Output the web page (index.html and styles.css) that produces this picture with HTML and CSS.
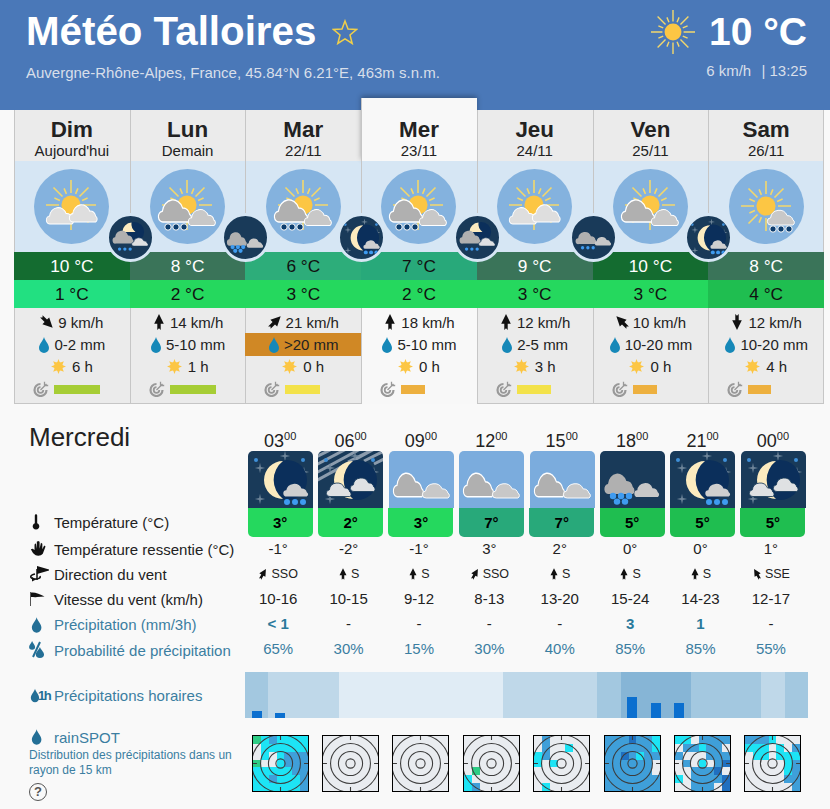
FILE: index.html
```html
<!DOCTYPE html>
<html lang="fr">
<head>
  <meta charset="UTF-8">
  <meta name="viewport" content="width=device-width, initial-scale=1.0">
  <title>Météo Talloires</title>
  <link rel="stylesheet" href="styles.css">
</head>
<body>

<!-- shared drawings -->
<svg class="defs" width="0" height="0" aria-hidden="true">
  <defs>
    <path id="cloud" d="M6 25a5 5 0 0 1-1-10a12 12 0 0 1 23-3a8 8 0 0 1 8 6a4 4 0 0 1 0 7z"/>
    <path id="drop" d="M6 0C7 4 11 7 11 11a5 5 0 0 1-10 0C1 7 5 4 6 0z"/>
    <path id="arrow" d="M6 0L10.200 8.500H7.500V14L6 12.500L4.500 14V8.500H1.800z"/>
    <path id="star4" d="M0-4L.7-.7L4 0L.7 .7L0 4L-.7 .7L-4 0L-.7-.7z"/>

    <symbol id="sun" viewBox="-25 -25 50 50">
      <g class="rays">
        <path d="M0-12V-25M0 12V25M-12 0H-25M12 0H25M-8.500-8.500L-17.500-17.500M8.500-8.500L17.500-17.500M-8.500 8.500L-17.500 17.500M8.500 8.500L17.500 17.500"/>
        <path d="M4.600-11.100L6.900-16.600M11.100-4.600L16.600-6.900M11.100 4.600L16.600 6.900M4.600 11.100L6.900 16.600M-4.600-11.100L-6.900-16.600M-11.100-4.600L-16.600-6.900M-11.100 4.600L-16.600 6.900M-4.600 11.100L-6.900 16.600"/>
      </g>
      <circle class="sun-disk" r="9.600"/>
    </symbol>

    <symbol id="small-sun" viewBox="-8 -8 16 16">
      <path class="spikes" d="M0-8L1.500-4L5.700-5.700L4-1.500L8 0L4 1.500L5.700 5.700L1.500 4L0 8L-1.500 4L-5.700 5.700L-4 1.500L-8 0L-4-1.500L-5.700-5.700L-1.500-4z"/>
      <circle class="spikes" r="4.700"/>
    </symbol>

    <symbol id="target" viewBox="0 0 16 16">
      <path class="target-ring" d="M7.500 3a6 6 0 1 0 6 6"/>
      <path class="target-in" d="M7.500 6.200a2.800 2.800 0 1 0 2.800 2.800"/>
      <path class="target-arrow" d="M7.500 9L13.500 3M11.500 .8V4.500H15.200"/>
    </symbol>

    <!-- day icons, blue disc -->
    <symbol id="d-sun-clouds" viewBox="0 0 75 75">
      <circle class="disc" cx="37.500" cy="37.500" r="37.500"/>
      <use href="#sun" x="12" y="11" width="50" height="50"/>
      <use href="#cloud" class="c-light" transform="translate(12 35) scale(.72 .8)"/>
      <use href="#cloud" class="c-light" transform="translate(35 32) scale(.74 .84)"/>
    </symbol>
    <symbol id="d-sun-overcast" viewBox="0 0 75 75">
      <circle class="disc" cx="37.500" cy="37.500" r="37.500"/>
      <use href="#sun" x="12" y="11" width="50" height="50"/>
      <use href="#cloud" class="c-grey" transform="translate(8 26) scale(.88 1.08)"/>
      <use href="#cloud" class="c-soft" transform="translate(38 37) scale(.72 .78)"/>
    </symbol>
    <symbol id="d-sun-overcast-rain" viewBox="0 0 75 75">
      <use href="#d-sun-overcast" width="75" height="75"/>
      <g class="drops-dark"><circle cx="18" cy="58" r="3.200"/><circle cx="26" cy="58" r="3.200"/><circle cx="34" cy="58" r="3.200"/></g>
    </symbol>
    <symbol id="d-sun-shower" viewBox="0 0 75 75">
      <circle class="disc" cx="37.500" cy="37.500" r="37.500"/>
      <use href="#sun" x="12" y="12" width="50" height="50"/>
      <use href="#cloud" class="c-soft" transform="translate(38 38) scale(.72 .72)"/>
      <g class="drops-dark"><circle cx="44" cy="60" r="3.200"/><circle cx="52" cy="60" r="3.200"/><circle cx="60" cy="60" r="3.200"/></g>
    </symbol>

    <!-- tile icons, 65x57 -->
    <symbol id="stars" viewBox="0 0 65 57">
      <g class="star-grey">
        <use href="#star4" transform="translate(12 17) scale(1.300)"/>
        <use href="#star4" transform="translate(37 5) scale(1.300)"/>
        <use href="#star4" transform="translate(56 21) scale(1.300)"/>
        <use href="#star4" transform="translate(12 48) scale(1.300)"/>
      </g>
      <g class="star-blue">
        <circle cx="8" cy="9" r="2"/><circle cx="55" cy="9" r="2"/>
      </g>
    </symbol>
    <symbol id="moon" viewBox="0 0 65 57">
      <circle class="moon-dark" cx="39" cy="29" r="20"/>
      <path class="moon-lit" d="M35 10A19 19 0 0 0 35 48A24 24 0 0 1 35 10z"/>
    </symbol>
    <symbol id="t-moon-rain" viewBox="0 0 65 57">
      <use href="#stars" width="65" height="57"/>
      <use href="#moon" width="65" height="57"/>
      <use href="#cloud" class="c-night" transform="translate(35 30) scale(.66 .62)"/>
      <g class="drops-blue"><circle cx="39" cy="51" r="3"/><circle cx="47" cy="51" r="3"/><circle cx="55" cy="51" r="3"/></g>
    </symbol>
    <symbol id="t-moon-clouds" viewBox="0 0 65 57">
      <use href="#stars" width="65" height="57"/>
      <use href="#moon" width="65" height="57"/>
      <use href="#cloud" class="c-pale" transform="translate(8 29) scale(.66 .66)"/>
      <use href="#cloud" class="c-pale" transform="translate(32 24) scale(.66 .66)"/>
    </symbol>
    <symbol id="t-haze-clouds" viewBox="0 0 65 57">
      <path class="haze" d="M-4 7L16 -3M-4 15L32 -4M-4 23L46 -4M-4 31L60 -4M30 11L70 -9M46 10L70 -2M56 13L70 6"/>
      <use href="#t-moon-clouds" width="65" height="57"/>
    </symbol>
    <symbol id="t-overcast" viewBox="0 0 65 57">
      <use href="#cloud" class="c-grey" transform="translate(4 17) scale(.8 1.150)"/>
      <use href="#cloud" class="c-soft" transform="translate(33 29.500) scale(.72 .7)"/>
    </symbol>
    <symbol id="t-snow" viewBox="0 0 65 57">
      <use href="#cloud" class="c-dim" transform="translate(4 18) scale(.8 1)"/>
      <use href="#cloud" class="c-dim2" transform="translate(34 29) scale(.66 .68)"/>
      <g class="drops-blue">
        <circle cx="13" cy="45" r="3.200"/><circle cx="21" cy="45" r="3.200"/><circle cx="29" cy="45" r="3.200"/>
        <circle cx="17" cy="50.600" r="3.200"/><circle cx="25" cy="50.600" r="3.200"/>
      </g>
    </symbol>
    <symbol id="t-clouds-rain" viewBox="0 0 65 57">
      <use href="#cloud" class="c-dim" transform="translate(5 18) scale(.85 .9)"/>
      <use href="#cloud" class="c-dim2" transform="translate(34 27) scale(.66 .62)"/>
      <g class="drops-blue"><circle cx="16" cy="46" r="2.500"/><circle cx="24" cy="46" r="2.500"/><circle cx="32" cy="46" r="2.500"/></g>
    </symbol>
    <symbol id="t-moon-overcast-rain" viewBox="0 0 65 57">
      <circle class="moon-dark" cx="38" cy="20" r="15"/>
      <path class="moon-lit" d="M34 6A15 15 0 0 0 20 20H40A15 15 0 0 1 34 6z"/>
      <use href="#cloud" class="c-dim" transform="translate(5 14) scale(.85 .95)"/>
      <use href="#cloud" class="c-pale" transform="translate(34 26) scale(.66 .62)"/>
      <g class="drops-blue"><circle cx="16" cy="46" r="2.500"/><circle cx="24" cy="46" r="2.500"/><circle cx="32" cy="46" r="2.500"/></g>
    </symbol>

    <!-- row icons -->
    <symbol id="i-thermo" viewBox="0 0 21 18">
      <path class="i-black" d="M5.800 2.500a1.200 1.200 0 0 1 2.400 0V10.200a3.300 3.300 0 1 1-2.400 0z"/>
    </symbol>
    <symbol id="i-hand" viewBox="0 0 21 18">
      <path class="i-black" transform="scale(.92)" d="M10 17C6 17 4 14 2 10L4 9.500L6 11V5L7.500 3.500L8.500 9.500V2L10 1L11.500 2V9.500L13 3L14.500 4V10L16.500 6L18 7L15 15C14 16.500 12 17 10 17z"/>
    </symbol>
    <symbol id="i-sock-turn" viewBox="0 0 21 18">
      <path class="i-line" d="M8 4V15"/>
      <path class="i-black" d="M8 1L20 4.500V5.500L8 9z"/>
      <path class="i-line" d="M6 9C1 10 0 13 5 14C9 14.500 12 13 11 11"/>
      <path class="i-black" d="M3 12L7 14.500L3 16.500z"/>
    </symbol>
    <symbol id="i-sock" viewBox="0 0 21 18">
      <path class="i-thin" d="M1.500 1V15"/>
      <path class="i-black" d="M2 1.500C6 1 11 3 15.500 5.500L8 6C6 6.500 4 6 2 6z"/>
    </symbol>
    <symbol id="i-drop" viewBox="-2 0 22 16">
      <use href="#drop" class="i-blue"/>
    </symbol>
    <symbol id="i-percent" viewBox="0 0 21 18">
      <use href="#drop" class="i-blue" transform="translate(-.5 0) scale(.6 .55)"/>
      <use href="#drop" class="i-blue" transform="translate(6 6) scale(.82 .68)"/>
      <path class="i-slash" d="M11 1L4 16"/>
    </symbol>
  </defs>
</svg>

<header class="head">
  <div class="head-left">
    <h1>Météo Talloires
      <svg class="fav" viewBox="0 0 26 26"><path d="M13 2L16 10L24.500 10.500L18 16L20.200 24.500L13 19.800L5.800 24.500L8 16L1.500 10.500L10 10z"/></svg>
    </h1>
    <p>Auvergne-Rhône-Alpes, France, 45.84°N 6.21°E, 463m s.n.m.</p>
  </div>
  <div class="head-right">
    <div class="now">
      <svg class="now-sun"><use href="#sun"/></svg>
      <span class="now-temp">10 °C</span>
    </div>
    <p class="now-sub">6 km/h <span class="sep">|</span> 13:25</p>
  </div>
</header>

<section class="days">

  <div class="day">
    <div class="day-head"><div class="day-name">Dim</div><div class="day-date">Aujourd'hui</div></div>
    <div class="day-icon">
      <svg class="day-pic"><use href="#d-sun-clouds"/></svg>
      <svg class="night" viewBox="0 0 65 65"><use href="#t-moon-overcast-rain" y="4" width="65" height="57"/></svg>
    </div>
    <div class="tmax t10">10 °C</div>
    <div class="tmin m1">1 °C</div>
    <div class="day-info">
      <div class="info-row"><svg class="wind" viewBox="0 0 12 14"><use href="#arrow" transform="rotate(135 6 7)"/></svg>9 km/h</div>
      <div class="info-row"><svg class="rain" viewBox="0 0 12 16"><use href="#drop"/></svg>0-2 mm</div>
      <div class="info-row sunny"><svg class="shine"><use href="#small-sun"/></svg>6 h</div>
      <div class="conf"><svg class="conf-ico"><use href="#target"/></svg><span class="conf-bar good w46"></span></div>
    </div>
  </div>

  <div class="day">
    <div class="day-head"><div class="day-name">Lun</div><div class="day-date">Demain</div></div>
    <div class="day-icon">
      <svg class="day-pic"><use href="#d-sun-overcast-rain"/></svg>
      <svg class="night" viewBox="0 0 65 65"><use href="#t-snow" y="2" width="65" height="57"/></svg>
    </div>
    <div class="tmax t8">8 °C</div>
    <div class="tmin m2">2 °C</div>
    <div class="day-info">
      <div class="info-row"><svg class="wind" viewBox="0 0 12 14"><use href="#arrow"/></svg>14 km/h</div>
      <div class="info-row"><svg class="rain" viewBox="0 0 12 16"><use href="#drop"/></svg>5-10 mm</div>
      <div class="info-row sunny"><svg class="shine"><use href="#small-sun"/></svg>1 h</div>
      <div class="conf"><svg class="conf-ico"><use href="#target"/></svg><span class="conf-bar good w46"></span></div>
    </div>
  </div>

  <div class="day">
    <div class="day-head"><div class="day-name">Mar</div><div class="day-date">22/11</div></div>
    <div class="day-icon">
      <svg class="day-pic"><use href="#d-sun-overcast-rain"/></svg>
      <svg class="night" viewBox="0 0 65 65"><use href="#t-moon-rain" y="4" width="65" height="57"/></svg>
    </div>
    <div class="tmax t6">6 °C</div>
    <div class="tmin m2">3 °C</div>
    <div class="day-info">
      <div class="info-row"><svg class="wind" viewBox="0 0 12 14"><use href="#arrow" transform="rotate(45 6 7)"/></svg>21 km/h</div>
      <div class="info-row heavy"><svg class="rain" viewBox="0 0 12 16"><use href="#drop"/></svg>&gt;20 mm</div>
      <div class="info-row sunny"><svg class="shine"><use href="#small-sun"/></svg>0 h</div>
      <div class="conf"><svg class="conf-ico"><use href="#target"/></svg><span class="conf-bar fair w35"></span></div>
    </div>
  </div>

  <div class="day active">
    <div class="day-head"><div class="day-name">Mer</div><div class="day-date">23/11</div></div>
    <div class="day-icon">
      <svg class="day-pic"><use href="#d-sun-overcast-rain"/></svg>
      <svg class="night" viewBox="0 0 65 65"><use href="#t-moon-overcast-rain" y="4" width="65" height="57"/></svg>
    </div>
    <div class="tmax t7">7 °C</div>
    <div class="tmin m2">2 °C</div>
    <div class="day-info">
      <div class="info-row"><svg class="wind" viewBox="0 0 12 14"><use href="#arrow"/></svg>18 km/h</div>
      <div class="info-row"><svg class="rain" viewBox="0 0 12 16"><use href="#drop"/></svg>5-10 mm</div>
      <div class="info-row sunny"><svg class="shine"><use href="#small-sun"/></svg>0 h</div>
      <div class="conf"><svg class="conf-ico"><use href="#target"/></svg><span class="conf-bar poor w24"></span></div>
    </div>
  </div>

  <div class="day">
    <div class="day-head"><div class="day-name">Jeu</div><div class="day-date">24/11</div></div>
    <div class="day-icon">
      <svg class="day-pic"><use href="#d-sun-clouds"/></svg>
      <svg class="night" viewBox="0 0 65 65"><use href="#t-clouds-rain" y="2" width="65" height="57"/></svg>
    </div>
    <div class="tmax t8">9 °C</div>
    <div class="tmin m2">3 °C</div>
    <div class="day-info">
      <div class="info-row"><svg class="wind" viewBox="0 0 12 14"><use href="#arrow"/></svg>12 km/h</div>
      <div class="info-row"><svg class="rain" viewBox="0 0 12 16"><use href="#drop"/></svg>2-5 mm</div>
      <div class="info-row sunny"><svg class="shine"><use href="#small-sun"/></svg>3 h</div>
      <div class="conf"><svg class="conf-ico"><use href="#target"/></svg><span class="conf-bar fair w34"></span></div>
    </div>
  </div>

  <div class="day">
    <div class="day-head"><div class="day-name">Ven</div><div class="day-date">25/11</div></div>
    <div class="day-icon">
      <svg class="day-pic"><use href="#d-sun-overcast"/></svg>
      <svg class="night" viewBox="0 0 65 65"><use href="#t-moon-rain" y="4" width="65" height="57"/></svg>
    </div>
    <div class="tmax t10">10 °C</div>
    <div class="tmin m2">3 °C</div>
    <div class="day-info">
      <div class="info-row"><svg class="wind" viewBox="0 0 12 14"><use href="#arrow" transform="rotate(-45 6 7)"/></svg>10 km/h</div>
      <div class="info-row"><svg class="rain" viewBox="0 0 12 16"><use href="#drop"/></svg>10-20 mm</div>
      <div class="info-row sunny"><svg class="shine"><use href="#small-sun"/></svg>0 h</div>
      <div class="conf"><svg class="conf-ico"><use href="#target"/></svg><span class="conf-bar poor w24"></span></div>
    </div>
  </div>

  <div class="day">
    <div class="day-head"><div class="day-name">Sam</div><div class="day-date">26/11</div></div>
    <div class="day-icon">
      <svg class="day-pic"><use href="#d-sun-shower"/></svg>
    </div>
    <div class="tmax t8">8 °C</div>
    <div class="tmin m4">4 °C</div>
    <div class="day-info">
      <div class="info-row"><svg class="wind" viewBox="0 0 12 14"><use href="#arrow" transform="rotate(180 6 7)"/></svg>12 km/h</div>
      <div class="info-row"><svg class="rain" viewBox="0 0 12 16"><use href="#drop"/></svg>10-20 mm</div>
      <div class="info-row sunny"><svg class="shine"><use href="#small-sun"/></svg>4 h</div>
      <div class="conf"><svg class="conf-ico"><use href="#target"/></svg><span class="conf-bar poor w23"></span></div>
    </div>
  </div>

</section>

<section class="hours">
  <h2 class="hours-title">Mercredi</h2>
  <div class="time">03<sup>00</sup></div>
  <div class="time">06<sup>00</sup></div>
  <div class="time">09<sup>00</sup></div>
  <div class="time">12<sup>00</sup></div>
  <div class="time">15<sup>00</sup></div>
  <div class="time">18<sup>00</sup></div>
  <div class="time">21<sup>00</sup></div>
  <div class="time">00<sup>00</sup></div>

  <svg class="tile dark"><use href="#t-moon-rain"/></svg>
  <svg class="tile dark"><use href="#t-haze-clouds"/></svg>
  <svg class="tile sky"><use href="#t-overcast"/></svg>
  <svg class="tile sky"><use href="#t-overcast"/></svg>
  <svg class="tile sky"><use href="#t-overcast"/></svg>
  <svg class="tile dark"><use href="#t-snow"/></svg>
  <svg class="tile dark"><use href="#t-moon-rain"/></svg>
  <svg class="tile dark"><use href="#t-moon-clouds"/></svg>

  <div class="lbl"><svg class="lbl-ico"><use href="#i-thermo"/></svg>Température (°C)</div>
  <div class="tile-temp m2">3°</div>
  <div class="tile-temp m2">2°</div>
  <div class="tile-temp m2">3°</div>
  <div class="tile-temp t7">7°</div>
  <div class="tile-temp t7">7°</div>
  <div class="tile-temp m4">5°</div>
  <div class="tile-temp m4">5°</div>
  <div class="tile-temp m4">5°</div>

  <div class="lbl"><svg class="lbl-ico"><use href="#i-hand"/></svg>Température ressentie (°C)</div>
  <div class="val">-1°</div><div class="val">-2°</div><div class="val">-1°</div><div class="val">3°</div>
  <div class="val">2°</div><div class="val">0°</div><div class="val">0°</div><div class="val">1°</div>

  <div class="lbl"><svg class="lbl-ico"><use href="#i-sock-turn"/></svg>Direction du vent</div>
  <div class="val dir"><svg class="dir-arrow" viewBox="0 0 12 14"><use href="#arrow" transform="rotate(30 6 7)"/></svg>SSO</div>
  <div class="val dir"><svg class="dir-arrow" viewBox="0 0 12 14"><use href="#arrow"/></svg>S</div>
  <div class="val dir"><svg class="dir-arrow" viewBox="0 0 12 14"><use href="#arrow"/></svg>S</div>
  <div class="val dir"><svg class="dir-arrow" viewBox="0 0 12 14"><use href="#arrow" transform="rotate(30 6 7)"/></svg>SSO</div>
  <div class="val dir"><svg class="dir-arrow" viewBox="0 0 12 14"><use href="#arrow"/></svg>S</div>
  <div class="val dir"><svg class="dir-arrow" viewBox="0 0 12 14"><use href="#arrow"/></svg>S</div>
  <div class="val dir"><svg class="dir-arrow" viewBox="0 0 12 14"><use href="#arrow"/></svg>S</div>
  <div class="val dir"><svg class="dir-arrow" viewBox="0 0 12 14"><use href="#arrow" transform="rotate(-30 6 7)"/></svg>SSE</div>

  <div class="lbl"><svg class="lbl-ico"><use href="#i-sock"/></svg>Vitesse du vent (km/h)</div>
  <div class="val">10-16</div><div class="val">10-15</div><div class="val">9-12</div><div class="val">8-13</div>
  <div class="val">13-20</div><div class="val">15-24</div><div class="val">14-23</div><div class="val">12-17</div>

  <div class="lbl blue"><svg class="lbl-ico"><use href="#i-drop"/></svg>Précipitation (mm/3h)</div>
  <div class="val mm">&lt; 1</div><div class="val">-</div><div class="val">-</div><div class="val">-</div>
  <div class="val">-</div><div class="val mm">3</div><div class="val mm">1</div><div class="val">-</div>

  <div class="lbl blue"><svg class="lbl-ico"><use href="#i-percent"/></svg>Probabilité de précipitation</div>
  <div class="val blue">65%</div><div class="val blue">30%</div><div class="val blue">15%</div><div class="val blue">30%</div>
  <div class="val blue">40%</div><div class="val blue">85%</div><div class="val blue">85%</div><div class="val blue">55%</div>

  <div class="lbl blue lbl-hourly">
    <span class="lbl-ico one-h"><svg class="one-h-drop" viewBox="0 0 12 16"><use href="#drop"/></svg><span class="one-h-text">1h</span></span>Précipitations horaires
  </div>
  <div class="strip">
    <div class="hr s2"><i style="height:7px"></i></div>
    <div class="hr s1"><i style="height:5px"></i></div>
    <div class="hr s1"></div>
    <div class="hr s1"></div>
    <div class="hr s0"></div>
    <div class="hr s0"></div>
    <div class="hr s0"></div>
    <div class="hr s0"></div>
    <div class="hr s0"></div>
    <div class="hr s0"></div>
    <div class="hr s0"></div>
    <div class="hr s1"></div>
    <div class="hr s1"></div>
    <div class="hr s1"></div>
    <div class="hr s1"></div>
    <div class="hr s2"></div>
    <div class="hr s3"><i style="height:21px"></i></div>
    <div class="hr s3"><i style="height:15px"></i></div>
    <div class="hr s3"><i style="height:15px"></i></div>
    <div class="hr s2"></div>
    <div class="hr s2"></div>
    <div class="hr s2"></div>
    <div class="hr s1"></div>
    <div class="hr s2"></div>
  </div>

  <div class="spot-label">
    <div class="lbl blue spot-name"><svg class="lbl-ico"><use href="#i-drop"/></svg>rainSPOT</div>
    <p class="spot-text">Distribution des précipitations dans un rayon de 15 km</p>
    <span class="help">?</span>
  </div>

  <svg class="spot" viewBox="0 0 56 56">
    <path class="sc" d="M8 4h8M24 4h32M8 12h48M8 20h8M24 20h8M24 28h8M0 36h40M0 44h16M24 44h24M0 52h48"/>
    <path class="sb" d="M16 4h8M48 20h8M32 20h16M32 28h24M40 36h16M16 44h8M48 44h8M48 52h8"/>
    <path class="sg" d="M0 4h8M0 28h8"/>
    <use href="#rings"/>
  </svg>
  <svg class="spot" viewBox="0 0 56 56"><use href="#rings"/></svg>
  <svg class="spot" viewBox="0 0 56 56"><use href="#rings"/></svg>
  <svg class="spot" viewBox="0 0 56 56">
    <path class="sc" d="M0 44h8M0 52h8"/>
    <path class="sb" d="M8 52h8"/>
    <path class="sg" d="M8 36h8"/>
    <use href="#rings"/>
  </svg>
  <svg class="spot" viewBox="0 0 56 56">
    <path class="sc" d="M32 12h8M0 20h8M0 28h8M16 28h8M8 52h8"/>
    <path class="sb" d="M8 4h8M8 12h8M8 20h8"/>
    <use href="#rings"/>
  </svg>
  <svg class="spot" viewBox="0 0 56 56">
    <path class="sb" d="M0 4h56M0 12h56M0 20h56M0 28h48M0 36h48M0 44h56M0 52h56"/>
    <path class="sd" d="M24 4h8M16 20h8"/>
    <path class="sc" d="M48 4h8M48 12h8M32 20h8"/>
    <use href="#rings"/>
  </svg>
  <svg class="spot" viewBox="0 0 56 56">
    <path class="sc" d="M0 4h16M24 12h8M0 44h8M24 28h8"/>
    <path class="sb" d="M24 4h32M8 12h16M32 12h16M48 20h8M0 20h8M32 20h16M8 28h8M40 28h8M16 36h24M16 44h32M16 52h24"/>
    <path class="sd" d="M48 28h8M40 36h8M48 44h8M48 52h8"/>
    <use href="#rings"/>
  </svg>
  <svg class="spot" viewBox="0 0 56 56">
    <path class="sb" d="M0 4h24M48 12h8M48 28h8M48 36h8M40 44h16M48 52h8"/>
    <path class="sc" d="M24 4h8M0 12h24M32 12h8M8 20h16M32 20h24M40 28h8M40 36h8"/>
    <use href="#rings"/>
  </svg>
</section>

<svg class="defs" width="0" height="0" aria-hidden="true">
  <defs>
    <g id="rings" class="rings">
      <circle cx="28" cy="28" r="4.700"/>
      <circle cx="28" cy="28" r="12.300"/>
      <circle cx="28" cy="28" r="20.300"/>
      <circle cx="28" cy="28" r="29.300"/>
      <path d="M28 0V4M28 52V56M0 28H4M52 28H56"/>
    </g>
  </defs>
</svg>

</body>
</html>
```
FILE: styles.css
```css
body {
  font-family: "Liberation Sans", Arial, sans-serif;
  background-color: #f9f9f9;
  color: #222;
  margin: 0;
}
svg { display: block; }
.defs { position: absolute; }

/* header */
.head {
  display: flex;
  justify-content: space-between;
  height: 110px;
  padding: 0 23px 0 26px;
  box-sizing: border-box;
  background-color: #4a78b8;
  color: #fff;
}
.head h1 {
  display: flex;
  align-items: center;
  gap: 16px;
  font-size: 40.300px;
  line-height: 44px;
  margin: 10px 0 0;
}
.fav {
  width: 26px;
  height: 26px;
  fill: none;
  stroke: #f0cf4a;
  stroke-width: 1.500;
}
.head p {
  margin: 10px 0 0;
  font-size: 15px;
  line-height: 18px;
  color: #d8dfea;
}
.head-right { text-align: right; }
.now {
  display: flex;
  align-items: center;
  justify-content: flex-end;
  gap: 14px;
  margin-top: 10px;
  height: 44px;
}
.now-sun { width: 44px; height: 44px; }
.now-temp { font-size: 39px; font-weight: bold; }
.head .now-sub { margin-top: 8px; font-size: 15px; }
.sep { margin-left: 6px; }

.rays { stroke: #f3d76c; stroke-width: 1.600; fill: none; }
.sun-disk { fill: #fcc644; }

/* seven day tabs */
.days {
  display: grid;
  grid-template-columns: repeat(7, 1fr);
  width: 810px;
  margin-left: 14px;
}
.day { position: relative; }
.day.active { margin-top: -12px; }
.day-head, .day-icon, .day-info {
  border-left: 1px solid #c6c6c6;
  padding-right: 1px;
}
.day:last-child .day-head,
.day:last-child .day-icon,
.day:last-child .day-info {
  border-right: 1px solid #c6c6c6;
  padding-right: 0;
}
.day-head {
  height: 51px;
  box-sizing: border-box;
  padding-top: 7px;
  text-align: center;
  background-color: #ebebeb;
}
.active .day-head {
  height: 63px;
  padding-top: 19px;
  background-color: #f8f8f8;
  box-shadow: 0 -2px 5px rgba(0, 0, 0, .3);
}
.day-name { font-size: 22.400px; font-weight: bold; line-height: 25px; }
.day-date { font-size: 15px; line-height: 18px; }
.day-icon {
  position: relative;
  height: 91px;
  box-sizing: border-box;
  padding-top: 8px;
  background-color: #d6e6f4;
}
.day-pic { width: 75px; height: 75px; margin: 0 auto; }
.night {
  position: absolute;
  z-index: 2;
  top: 52px;
  right: -25px;
  width: 43px;
  height: 43px;
  border: 3px solid #d6e6f4;
  border-radius: 50%;
  background-color: #193a59;
}
.tmax, .tmin {
  height: 28px;
  font-size: 17.300px;
  line-height: 28px;
  text-align: center;
  color: #111;
}
.t10 { background-color: #146c30; color: #fff; }
.t8 { background-color: #3a7459; color: #fff; }
.t6 { background-color: #2dad7a; }
.t7 { background-color: #28a97a; }
.m1 { background-color: #22e081; }
.m2 { background-color: #25d85e; }
.m4 { background-color: #1fbe50; }

.day-info {
  height: 96px;
  box-sizing: border-box;
  padding-top: 3px;
  background-color: #ebebeb;
  border-bottom: 1px solid #c6c6c6;
  font-size: 15px;
}
.active .day-info { background-color: #f8f8f8; border-bottom: 0; }
.info-row {
  display: flex;
  align-items: center;
  justify-content: center;
  gap: 4px;
  height: 22.400px;
}
.heavy { margin: 0 -1px; background-color: #d08825; }
.wind { width: 14px; height: 16px; fill: #111; }
.rain { width: 12px; height: 16px; fill: #1688b8; }
.shine { width: 15px; height: 15px; }
.spikes { fill: #fcc644; }
.sunny { gap: 6px; }
.conf {
  display: flex;
  align-items: center;
  gap: 5px;
  height: 22px;
  padding-left: 18px;
}
.conf-ico { width: 16px; height: 16px; }
.target-ring { fill: none; stroke: #999; stroke-width: 2.200; }
.target-in { fill: none; stroke: #999; stroke-width: 1.800; }
.target-arrow { fill: none; stroke: #999; stroke-width: 1.300; }
.conf-bar { display: block; height: 9px; }
.good { background-color: #a6cd35; }
.fair { background-color: #f3e24a; }
.poor { background-color: #edb03f; }
.w46 { width: 46px; }
.w35 { width: 35px; }
.w34 { width: 34px; }
.w24 { width: 24px; }
.w23 { width: 23px; }

/* icon parts */
.c-grey, .c-light, .c-soft {
  stroke: #fff;
  stroke-width: 1.300px;
  vector-effect: non-scaling-stroke;
}
.disc { fill: #84b2de; }
.c-grey { fill: #b0b0b0; }
.c-light { fill: #dedede; }
.c-soft { fill: #c8c8c8; }
.c-night { fill: #cfcfcf; stroke: none; }
.c-pale { fill: #dfe1e3; stroke: #193a59; stroke-width: 1.300px; }
.c-dim { fill: #b0b0b0; stroke: none; }
.c-dim2 { fill: #c8c8c8; stroke: none; }
.drops-dark circle { fill: #0d3d6e; stroke: #fff; stroke-width: 1; }
.drops-blue circle { fill: #3f9bf0; }
.star-grey { fill: #6d8498; }
.star-blue { fill: #3f8fd8; }
.moon-dark { fill: #0b2f5b; }
.moon-lit { fill: #fcebbf; }
.haze { fill: none; stroke: #8c9cad; stroke-width: 3; }

/* hourly table */
.hours {
  display: grid;
  grid-template-columns: 216px repeat(8, 70.400px);
  grid-template-rows: 21px 57px 28.700px repeat(5, 25.200px) auto auto;
  margin-top: 26px;
  padding-left: 29px;
  font-size: 15px;
}
.hours-title {
  grid-row: 1 / span 2;
  margin: -8px 0 0;
  font-size: 26px;
  font-weight: normal;
}
.time { padding-top: 1px; font-size: 18px; line-height: 21px; text-align: center; }
.time sup { font-size: 11px; line-height: 0; }
.tile {
  width: 65px;
  height: 57px;
  margin: 0 3px;
  border-radius: 5px 5px 0 0;
}
.dark { background-color: #193a59; }
.sky { background-color: #7bacdd; }
.tile-temp {
  margin: 0 2.700px;
  border-radius: 0 0 5px 5px;
  font-weight: bold;
  line-height: 29px;
  text-align: center;
  color: #000;
}
.lbl {
  display: flex;
  align-items: center;
  gap: 4px;
}
.lbl-ico { flex: none; width: 21px; height: 18px; }
.blue { color: #3b7ea1; }
.val { padding-right: 4px; line-height: 24px; text-align: center; }
.mm { font-weight: bold; color: #2a7a9c; }
.dir {
  display: flex;
  align-items: center;
  justify-content: center;
  gap: 3px;
  font-size: 12.500px;
}
.dir-arrow { width: 10px; height: 12px; fill: #111; }

.i-black { fill: #111; }
.i-blue { fill: #246f96; }
.i-line { fill: none; stroke: #111; stroke-width: 1.500; }
.i-thin { fill: none; stroke: #555; stroke-width: 1; }
.i-slash { fill: none; stroke: #246f96; stroke-width: 2; }

.lbl-hourly { align-self: center; margin-top: 9px; }
.one-h { display: flex; align-items: center; padding-left: 1px; box-sizing: border-box; }
.one-h-drop { flex: none; width: 10px; height: 15px; margin-right: -2px; fill: #246f96; }
.one-h-text { font-size: 13px; font-weight: bold; color: #246f96; letter-spacing: -1.500px; }

.strip {
  grid-column: 2 / -1;
  display: flex;
  height: 46px;
  margin-top: 9.800px;
}
.hr {
  flex: 1;
  display: flex;
  align-items: flex-end;
  justify-content: center;
}
.hr i { display: block; width: 10px; background-color: #0b6fcf; }
.s0 { background-color: #e0ecf5; }
.s1 { background-color: #bfd8e9; }
.s2 { background-color: #a3c8e0; }
.s3 { background-color: #86b5d6; }

.spot-label { margin-top: 10px; }
.spot-name { height: 18px; }
.spot-text {
  margin: 2px 0 0;
  font-size: 12px;
  line-height: 15px;
  color: #3b7ea1;
}
.help {
  display: block;
  width: 16px;
  height: 16px;
  margin-top: 5px;
  border: 1px solid #555;
  border-radius: 50%;
  font-size: 13px;
  font-weight: bold;
  line-height: 16px;
  text-align: center;
  color: #555;
}
.spot {
  box-sizing: border-box;
  width: 57px;
  height: 57px;
  margin: 17px auto 0;
  border: 1px solid #000;
  background-color: #e9ecf0;
  shape-rendering: crispEdges;
}
.spot path { fill: none; stroke-width: 8; }
.sc { stroke: #1de4f5; }
.sb { stroke: #3f9fd9; }
.sd { stroke: #2070c0; }
.sg { stroke: #2ecc85; }
.rings { fill: none; stroke: #3c3c3c; stroke-width: 1.100; shape-rendering: auto; }
```
